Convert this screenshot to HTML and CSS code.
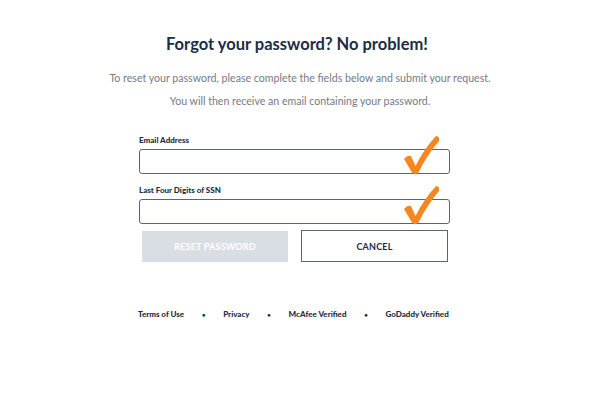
FILE: index.html
```html
<!DOCTYPE html>
<html lang="en">
<head>
<meta charset="utf-8">
<title>Forgot Password</title>
<link rel="stylesheet" href="styles.css">
</head>
<body>
<main class="page">
  <h1 class="title">Forgot your password? No problem!</h1>
  <p class="intro">To reset your password, please complete the fields below and submit your request.<br>You will then receive an email containing your password.</p>
  <form class="form">
    <div class="field">
      <label class="label">Email Address</label>
      <div class="input-wrap">
        <input class="input" type="text">
        <svg class="check" viewBox="0 0 36 40" width="36" height="40"><path d="M1,24 Q4,20 8,21 L12.5,31 Q21,14 33,1 Q37.5,2 36.5,5.5 Q24,20 15.5,37.5 Q12,41 9,37.5 Z" fill="#f7861f"/></svg>
      </div>
    </div>
    <div class="field field-last">
      <label class="label">Last Four Digits of SSN</label>
      <div class="input-wrap">
        <input class="input" type="text">
        <svg class="check" viewBox="0 0 36 40" width="36" height="40"><path d="M1,24 Q4,20 8,21 L12.5,31 Q21,14 33,1 Q37.5,2 36.5,5.5 Q24,20 15.5,37.5 Q12,41 9,37.5 Z" fill="#f7861f"/></svg>
      </div>
    </div>
    <div class="actions">
      <button type="button" class="btn btn-reset">RESET PASSWORD</button>
      <button type="button" class="btn btn-cancel">CANCEL</button>
    </div>
  </form>
  <nav class="footer">
    <a>Terms of Use</a><span class="dot">•</span>
    <a>Privacy</a><span class="dot">•</span>
    <a>McAfee Verified</a><span class="dot">•</span>
    <a>GoDaddy Verified</a>
  </nav>
</main>
</body>
</html>
```
FILE: styles.css
```css
* { box-sizing: border-box; }
html, body { margin: 0; padding: 0; background: #fff; }
body { font-family: "Lato", "Noto Sans", sans-serif; color: #1b2d45; }
.page { width: 600px; height: 400px; padding-top: 33px; }
.title {
  margin: 0 0 0 -6px;
  text-align: center;
  font-size: 16.5px;
  font-weight: 700;
  line-height: 22px;
  color: #1b2d45;
}
.intro {
  margin: 12px 0 0 0;
  text-align: center;
  font-size: 10.6px;
  font-weight: 400;
  line-height: 23px;
  color: #737a86;
}
.form { margin: 22px 0 0 139px; width: 311px; }
.field { margin-bottom: 11px; }
.field-last { margin-bottom: 6px; }
.label {
  display: block;
  font-size: 8px;
  font-weight: 900;
  line-height: 10px;
  color: #1b2d45;
  margin-bottom: 4px;
}
.input-wrap { position: relative; }
.input {
  display: block;
  width: 311px;
  height: 25px;
  border: 1.5px solid #5d6470;
  border-radius: 3px;
  background: #fff;
  outline: none;
}
.check { position: absolute; left: 264px; top: -14px; }
.actions { display: flex; gap: 13px; margin: 0 0 0 3px; }
.btn {
  width: 146px;
  height: 32px;
  font-family: inherit;
  font-size: 9px;
  letter-spacing: 0.2px;
  border-radius: 0;
  padding: 0;
}
.btn-reset { background: #d9dde4; color: #fff; border: none; font-weight: 700; margin-top: 1px; height: 31px; }
.btn-cancel { background: #fff; color: #1b2d45; border: 1px solid #5d6470; font-weight: 700; width: 147px; }
.footer {
  display: flex;
  align-items: center;
  margin: 47px 0 0 138px;
  font-size: 8px;
  font-weight: 900;
  color: #1b2d45;
}
.footer a { color: #1b2d45; }
.dot { width: 39px; text-align: center; font-size: 6px; }
```
